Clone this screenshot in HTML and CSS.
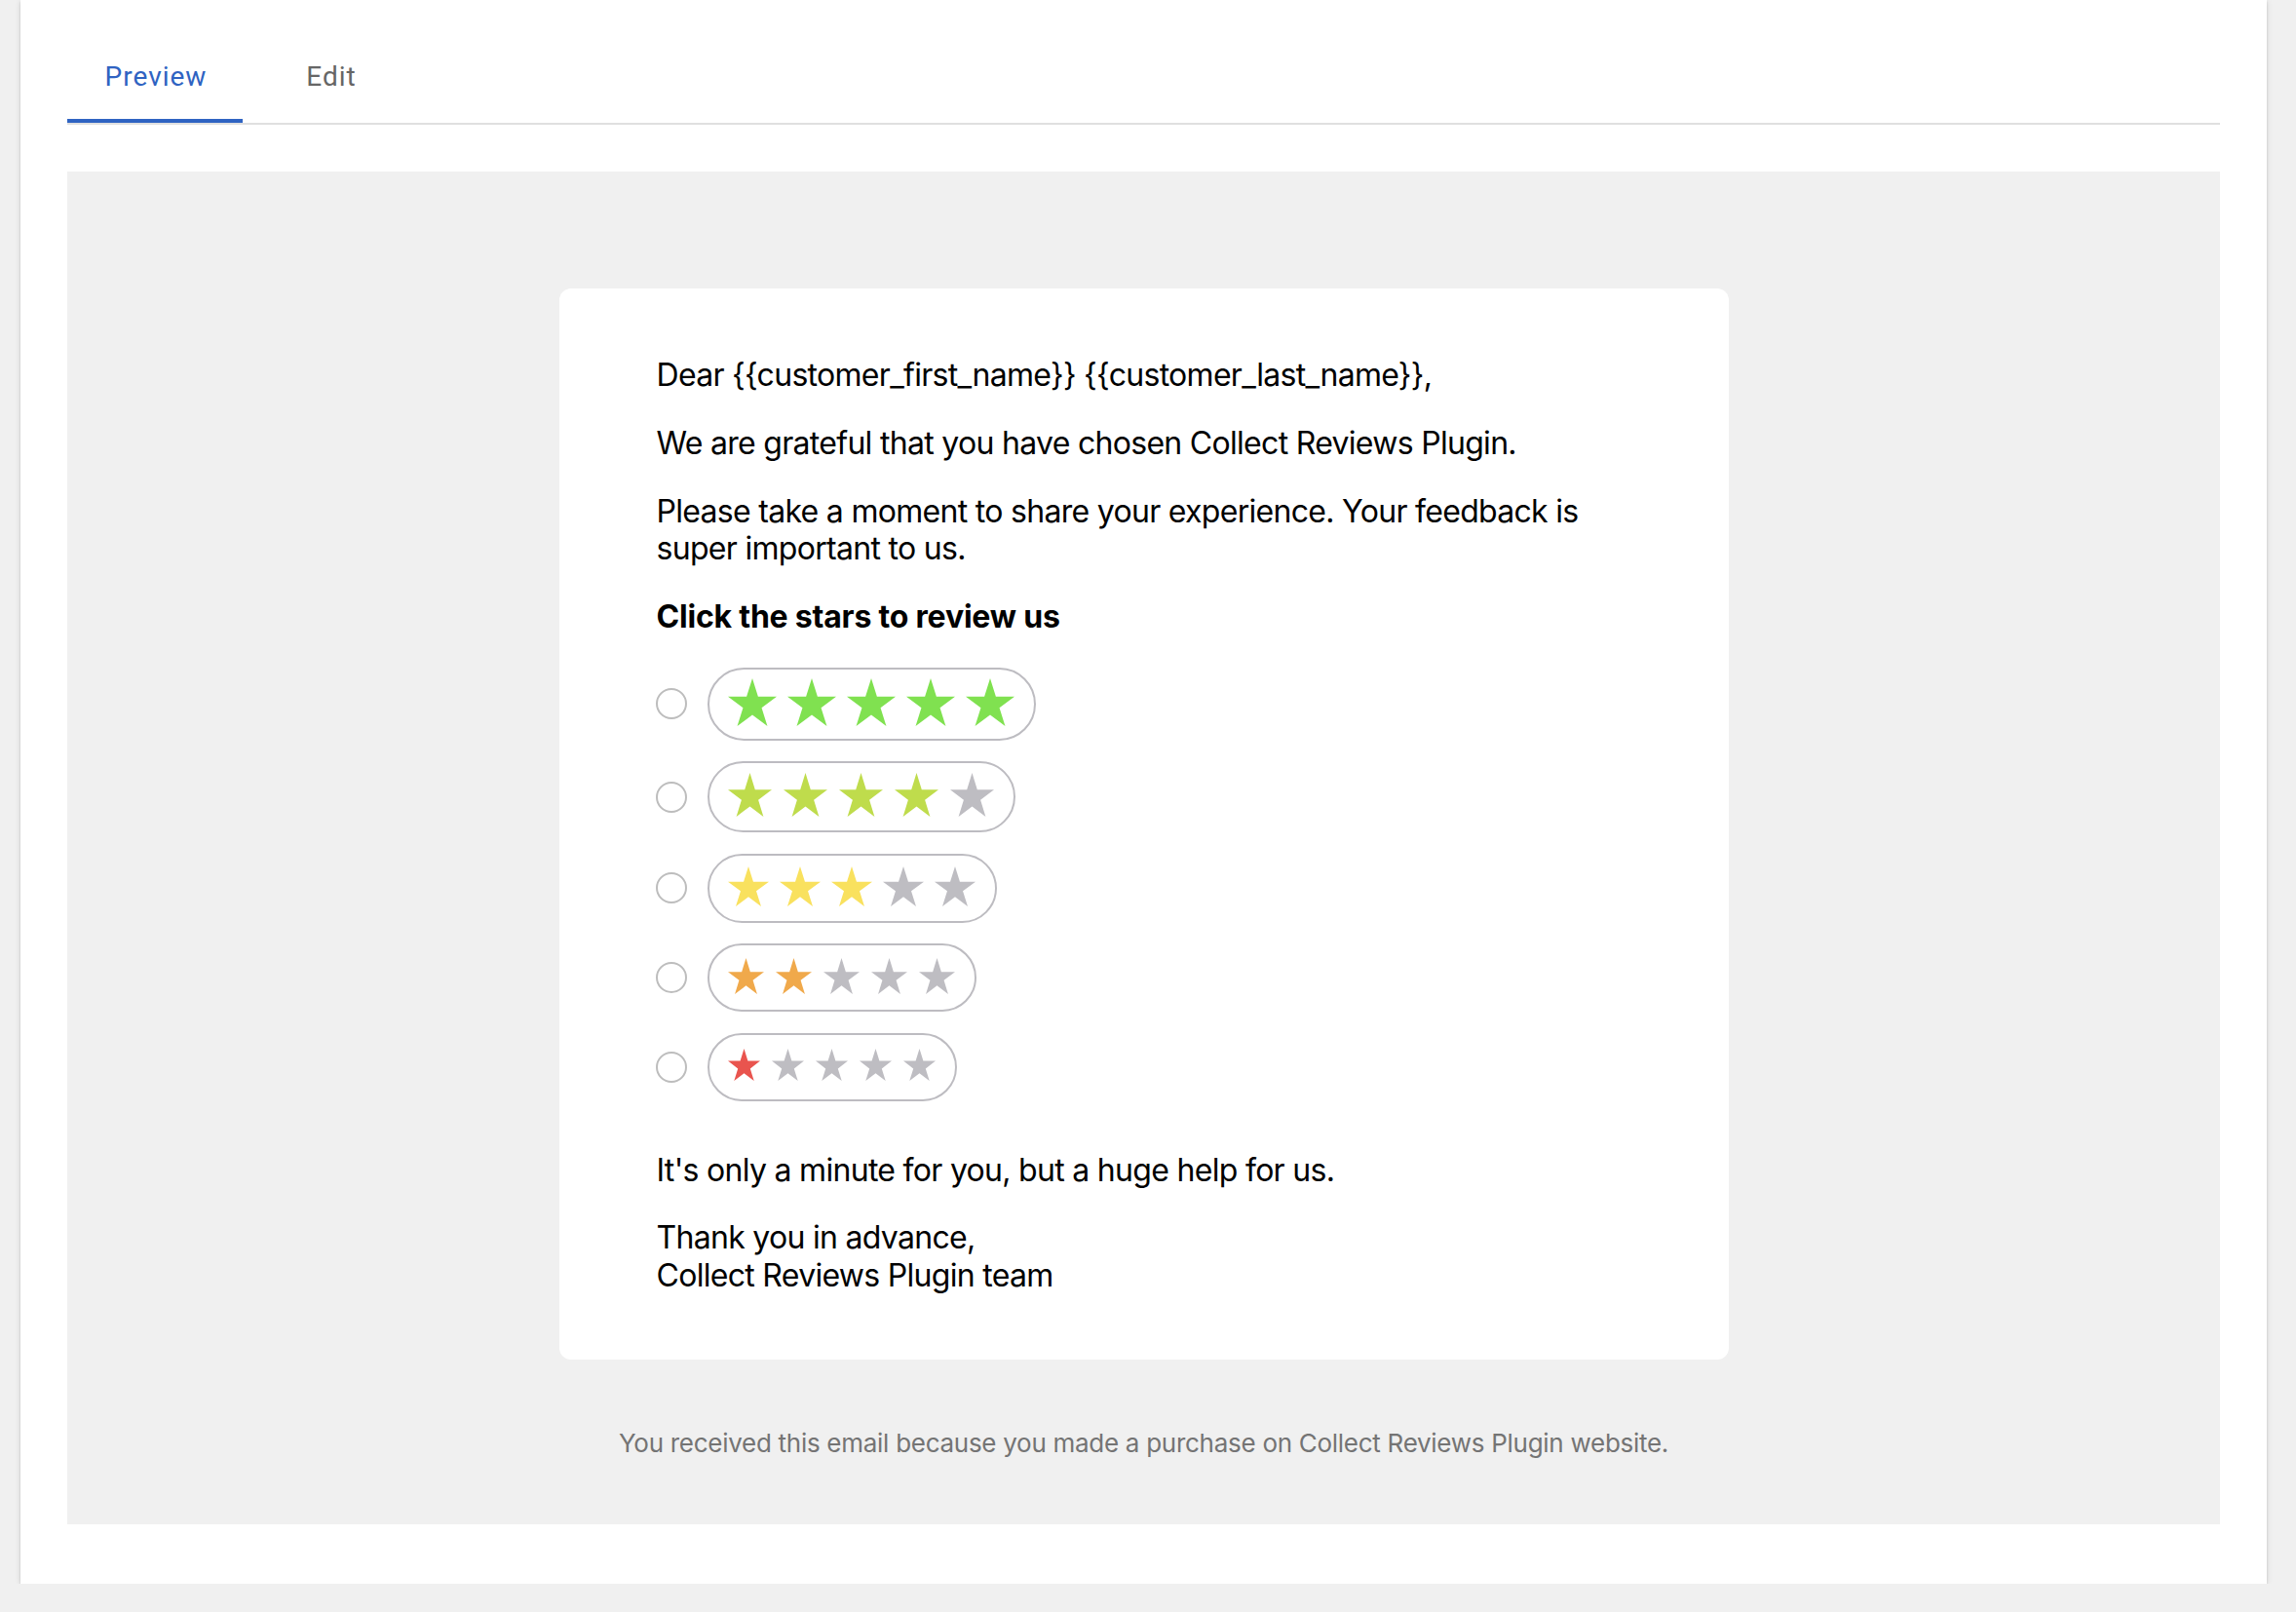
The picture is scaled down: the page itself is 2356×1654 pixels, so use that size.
FILE: index.html
```html
<!DOCTYPE html>
<html lang="en">
<head>
<meta charset="utf-8">
<title>Review email preview</title>
<link rel="stylesheet" href="styles.css">
</head>
<body>
<svg width="0" height="0" class="defs" aria-hidden="true">
  <defs>
    <symbol id="star" viewBox="0 0 100 95.1" preserveAspectRatio="none">
      <polygon points="50,0 61.8,36.32 100,36.32 69.1,58.77 80.9,95.1 50,72.65 19.1,95.1 30.9,58.77 0,36.32 38.2,36.32"/>
    </symbol>
  </defs>
</svg>
<div class="panel">
  <div class="tabs">
    <div class="tab active">Preview</div>
    <div class="tab">Edit</div>
  </div>
  <div class="preview">
    <div class="email">
      <p>Dear {{customer_first_name}} {{customer_last_name}},</p>
      <p>We are grateful that you have chosen Collect Reviews Plugin.</p>
      <p>Please take a moment to share your experience. Your feedback is super important to us.</p>
      <p class="heading">Click the stars to review us</p>
      <div class="rates">
        <div class="rate">
          <span class="radio"></span>
          <span class="pill s5">
            <svg class="on"><use href="#star"/></svg><svg class="on"><use href="#star"/></svg><svg class="on"><use href="#star"/></svg><svg class="on"><use href="#star"/></svg><svg class="on"><use href="#star"/></svg>
          </span>
        </div>
        <div class="rate">
          <span class="radio"></span>
          <span class="pill s4">
            <svg class="on"><use href="#star"/></svg><svg class="on"><use href="#star"/></svg><svg class="on"><use href="#star"/></svg><svg class="on"><use href="#star"/></svg><svg class="off"><use href="#star"/></svg>
          </span>
        </div>
        <div class="rate">
          <span class="radio"></span>
          <span class="pill s3">
            <svg class="on"><use href="#star"/></svg><svg class="on"><use href="#star"/></svg><svg class="on"><use href="#star"/></svg><svg class="off"><use href="#star"/></svg><svg class="off"><use href="#star"/></svg>
          </span>
        </div>
        <div class="rate">
          <span class="radio"></span>
          <span class="pill s2">
            <svg class="on"><use href="#star"/></svg><svg class="on"><use href="#star"/></svg><svg class="off"><use href="#star"/></svg><svg class="off"><use href="#star"/></svg><svg class="off"><use href="#star"/></svg>
          </span>
        </div>
        <div class="rate">
          <span class="radio"></span>
          <span class="pill s1">
            <svg class="on"><use href="#star"/></svg><svg class="off"><use href="#star"/></svg><svg class="off"><use href="#star"/></svg><svg class="off"><use href="#star"/></svg><svg class="off"><use href="#star"/></svg>
          </span>
        </div>
      </div>
      <p>It's only a minute for you, but a huge help for us.</p>
      <p class="last">Thank you in advance,<br>Collect Reviews Plugin team</p>
    </div>
    <p class="footer">You received this email because you made a purchase on Collect Reviews Plugin website.</p>
  </div>
</div>
</body>
</html>
```
FILE: styles.css
```css
html, body {
  margin: 0;
  padding: 0;
  background: #f0f0f0;
}

.defs {
  position: absolute;
  width: 0;
  height: 0;
  overflow: hidden;
}

.panel {
  box-sizing: border-box;
  width: 2305px;
  margin-left: 21px;
  padding: 30px 48px 61px;
  background: #ffffff;
  box-shadow: 0 3px 2px -2px rgba(0, 0, 0, 0.3), 0 2px 2px 0 rgba(0, 0, 0, 0.14), 0 1px 6px 0 rgba(0, 0, 0, 0.12);
}

.tabs {
  display: flex;
  border-bottom: 2px solid #e0e0e0;
}

.tab {
  position: relative;
  width: 180px;
  height: 96px;
  display: flex;
  align-items: center;
  justify-content: center;
  padding-left: 2px;
  box-sizing: border-box;
  font-family: Roboto, "Liberation Sans", sans-serif;
  font-weight: 400;
  font-size: 28px;
  letter-spacing: 1px;
  color: #666666;
}

.tab.active {
  color: #2f63c2;
}

.tab.active::after {
  content: "";
  position: absolute;
  left: 0;
  right: 0;
  bottom: 0;
  height: 4px;
  background: #2f63c2;
}

.preview {
  margin-top: 48px;
  background: #f0f0f0;
  padding: 120px 0 67px;
  font-family: Inter, "Noto Sans", sans-serif;
}

.email {
  box-sizing: border-box;
  width: 1200px;
  margin: 0 auto;
  background: #ffffff;
  border-radius: 12px;
  padding: 70px 98px 67px 100px;
  color: #000000;
  font-size: 32px;
  line-height: 38.4px;
  letter-spacing: -0.7px;
}

.email p {
  margin: 0 0 31.5px;
}

.email p.heading {
  font-weight: 700;
  letter-spacing: -0.2px;
  margin-bottom: 32px;
}

.email p.last {
  margin-bottom: 0;
}

.rates {
  display: flex;
  flex-direction: column;
  align-items: flex-start;
  gap: 21.5px;
  margin-bottom: 52px;
}

.rate {
  display: flex;
  align-items: center;
}

.radio {
  box-sizing: border-box;
  width: 32px;
  height: 32px;
  border: 2px solid #bdbdbd;
  border-radius: 50%;
  margin-right: 21px;
  margin-left: -1px;
  flex: none;
}

.pill {
  box-sizing: border-box;
  display: flex;
  align-items: center;
  border: 2px solid #bdbcc1;
  border-radius: 40px;
  padding: 0 20px 4px 19px;
}

.pill svg {
  display: block;
  flex: none;
}

.pill svg.off {
  fill: #bebdc2;
}

.s5 { height: 75px; gap: 11px; }
.s5 svg { width: 50px; height: 49px; }
.s5 svg.on { fill: #80e150; }

.s4 { height: 73px; gap: 12px; }
.s4 svg { width: 45px; height: 45px; }
.s4 svg.on { fill: #bfdc4c; }

.s3 { height: 71px; gap: 11px; }
.s3 svg { width: 42px; height: 41px; }
.s3 svg.on { fill: #f9e15e; }

.s2 { height: 70px; gap: 12px; }
.s2 svg { width: 37px; height: 37px; }
.s2 svg.on { fill: #f0a94b; }

.s1 { height: 70px; gap: 12px; }
.s1 svg { width: 33px; height: 33px; }
.s1 svg.on { fill: #e9544e; }

.footer {
  margin: 70px 0 0;
  text-align: center;
  font-size: 26px;
  line-height: 32px;
  letter-spacing: -0.28px;
  color: #747474;
}
```
